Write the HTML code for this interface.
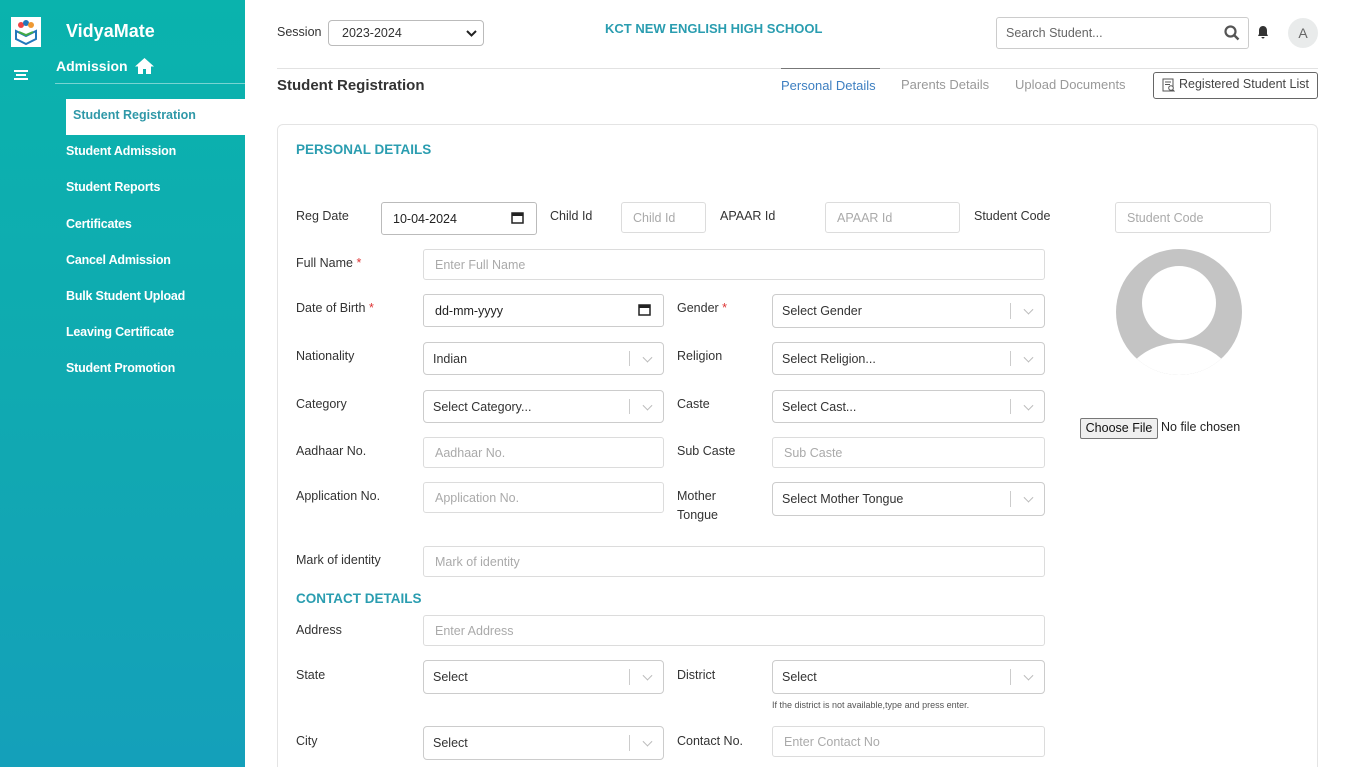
<!DOCTYPE html>
<html style="overflow:hidden;height:767px"><head><meta charset="utf-8"><style>
*{box-sizing:border-box;margin:0;padding:0}
body{width:1348px;height:767px;overflow:hidden;background:#fff;font-family:"Liberation Sans",sans-serif;position:relative;color:#333}
.a{position:absolute}
#sb{left:0;top:0;width:245px;height:767px;background:linear-gradient(180deg,#0ab3ad 0%,#11a8b2 60%,#14a0ba 100%)}
.mi{position:absolute;left:66px;color:#fff;font-weight:bold;font-size:12.5px;letter-spacing:-0.2px}
.lbl{position:absolute;font-size:12.5px;color:#333;line-height:19px}
.in{position:absolute;border:1px solid #dcdcdc;border-radius:3px;font-size:12.5px;color:#aaa;padding-left:11px;display:flex;align-items:center;background:#fff}
.sel{position:absolute;border:1px solid #ccc;border-radius:4px;font-size:12.5px;color:#333;padding-left:9px;display:flex;align-items:center;background:#fff}
.sel:after{content:"";position:absolute;right:33px;top:8px;bottom:8px;border-left:1px solid #ccc}
.sel.n:after{display:none}
.sel i{position:absolute;right:12px;top:50%;width:7px;height:7px;border-right:1.5px solid #bbb;border-bottom:1.5px solid #bbb;transform:translateY(-70%) rotate(45deg)}
.req{color:#d33}
.h{position:absolute;color:#2a9db0;font-size:13.5px;font-weight:bold}
</style></head><body>
<div id="sb" class="a">
  <div class="a" style="left:11px;top:17px;width:30px;height:30px;background:#fff">
    <svg width="30" height="30" viewBox="0 0 30 30"><circle cx="10" cy="8" r="3" fill="#e44"/><circle cx="15" cy="6" r="3" fill="#27b"/><circle cx="20" cy="8" r="3" fill="#e93"/><path d="M5 14l10 5 10-5v8l-10 5-10-5z" fill="none" stroke="#27b" stroke-width="2"/><path d="M8 15l7 3 7-3" stroke="#4a4" stroke-width="2" fill="none"/></svg>
  </div>
  <div class="a" style="left:66px;top:21px;color:#fff;font-weight:bold;font-size:18px">VidyaMate</div>
  <div class="a" style="left:14px;top:70px;width:14px">
    <div style="height:2px;background:#fff;margin-bottom:2px"></div><div style="height:2px;background:#fff;margin:0 2px 2px"></div><div style="height:2px;background:#fff"></div>
  </div>
  <div class="a" style="left:56px;top:58px;color:#fff;font-weight:bold;font-size:14px">Admission</div>
  <svg class="a" style="left:134px;top:57px" width="21" height="18" viewBox="0 0 21 18"><path d="M10.5 1L1 9.5h3V17h5v-5h3v5h5V9.5h3z" fill="#fff"/></svg>
  <div class="a" style="left:55px;top:83px;width:190px;height:1px;background:rgba(255,255,255,.45)"></div>
  <div class="a" style="left:66px;top:99px;width:179px;height:36px;background:#fff"></div>
  <div class="a" style="left:73px;top:108px;color:#2f98a8;font-weight:bold;font-size:12.5px">Student Registration</div>
  <div class="mi" style="top:144px">Student Admission</div>
  <div class="mi" style="top:180px">Student Reports</div>
  <div class="mi" style="top:217px">Certificates</div>
  <div class="mi" style="top:253px">Cancel Admission</div>
  <div class="mi" style="top:289px">Bulk Student Upload</div>
  <div class="mi" style="top:325px">Leaving Certificate</div>
  <div class="mi" style="top:361px">Student Promotion</div>
</div>

<div class="lbl" style="left:277px;top:23px">Session</div>
<div class="sel n" style="left:328px;top:20px;width:156px;height:26px;padding-left:13px;border-color:#bbb">2023-2024<svg class="a" style="right:6px;top:9px" width="11" height="8"><path d="M1 1l4.5 4.5L10 1" stroke="#222" stroke-width="2" fill="none"/></svg></div>
<div class="a" style="left:605px;top:21px;color:#2a9db0;font-weight:bold;font-size:13px">KCT NEW ENGLISH HIGH SCHOOL</div>
<div class="in" style="left:996px;top:17px;width:253px;height:32px;border-color:#ccc;color:#666;padding-left:9px">Search Student...</div>
<svg class="a" style="left:1224px;top:25px" width="16" height="16"><circle cx="6.5" cy="6.5" r="5" stroke="#555" stroke-width="2.2" fill="none"/><path d="M10 10l4.5 4.5" stroke="#555" stroke-width="2.4"/></svg>
<svg class="a" style="left:1257px;top:25px" width="12" height="14"><path d="M6 1c-2.5 0-4 2-4 4.5V9L1 11h10l-1-2V5.5C10 3 8.5 1 6 1zM4.5 12a1.5 1.5 0 003 0z" fill="#333"/></svg>
<div class="a" style="left:1288px;top:18px;width:30px;height:30px;border-radius:50%;background:#e9ebeb;color:#666;font-size:14px;text-align:center;line-height:30px">A</div>
<div class="a" style="left:277px;top:68px;width:1041px;height:1px;background:#e2e2e2"></div>
<div class="a" style="left:781px;top:68px;width:99px;height:1px;background:#777"></div>
<div class="a" style="left:277px;top:77px;font-weight:bold;font-size:15px;color:#333">Student Registration</div>
<div class="a" style="left:781px;top:78px;font-size:13px;color:#3d7fc1">Personal Details</div>
<div class="a" style="left:901px;top:77px;font-size:13px;color:#999">Parents Details</div>
<div class="a" style="left:1015px;top:77px;font-size:13px;color:#999">Upload Documents</div>
<div class="a" style="left:1153px;top:72px;width:165px;height:27px;border:1px solid #666;border-radius:3px;font-size:12.5px;color:#444;padding:4px 0 0 25px;white-space:nowrap">Registered Student List</div>
<svg class="a" style="left:1162px;top:78px" width="14" height="15"><rect x="1" y="1" width="10" height="12" fill="none" stroke="#555"/><path d="M3 4h6M3 6.5h5" stroke="#555"/><circle cx="9" cy="10" r="2.3" fill="#fff" stroke="#555"/><path d="M10.5 11.5l2 2" stroke="#555"/></svg>

<div class="a" style="left:277px;top:124px;width:1041px;height:643px;border:1px solid #e4e4e4;border-bottom:none;border-radius:6px 6px 0 0"></div>
<div class="h" style="left:296px;top:142px">PERSONAL DETAILS</div>

<div class="lbl" style="left:296px;top:207px">Reg Date</div>
<div class="in" style="left:381px;top:202px;width:156px;height:33px;color:#222;border-color:#bbb">10-04-2024</div>
<svg class="a" style="left:511px;top:211px" width="13" height="13"><rect x="1" y="2" width="11" height="10" fill="none" stroke="#222" stroke-width="1.5"/><rect x="1" y="2" width="11" height="3" fill="#222"/></svg>
<div class="lbl" style="left:550px;top:207px">Child Id</div>
<div class="in" style="left:621px;top:202px;width:85px;height:31px">Child Id</div>
<div class="lbl" style="left:720px;top:207px">APAAR Id</div>
<div class="in" style="left:825px;top:202px;width:135px;height:31px">APAAR Id</div>
<div class="lbl" style="left:974px;top:207px">Student Code</div>
<div class="in" style="left:1115px;top:202px;width:156px;height:31px">Student Code</div>

<div class="lbl" style="left:296px;top:254px">Full Name <span class="req">*</span></div>
<div class="in" style="left:423px;top:249px;width:622px;height:31px">Enter Full Name</div>

<div class="lbl" style="left:296px;top:299px">Date of Birth <span class="req">*</span></div>
<div class="in" style="left:423px;top:294px;width:241px;height:33px;color:#222;border-color:#ccc">dd-mm-yyyy</div>
<svg class="a" style="left:638px;top:303px" width="13" height="13"><rect x="1" y="2" width="11" height="10" fill="none" stroke="#222" stroke-width="1.5"/><rect x="1" y="2" width="11" height="3" fill="#222"/></svg>
<div class="lbl" style="left:677px;top:299px">Gender <span class="req">*</span></div>
<div class="sel" style="left:772px;top:294px;width:273px;height:34px">Select Gender<i></i></div>

<div class="lbl" style="left:296px;top:347px">Nationality</div>
<div class="sel" style="left:423px;top:342px;width:241px;height:33px">Indian<i></i></div>
<div class="lbl" style="left:677px;top:347px">Religion</div>
<div class="sel" style="left:772px;top:342px;width:273px;height:33px">Select Religion...<i></i></div>

<div class="lbl" style="left:296px;top:395px">Category</div>
<div class="sel" style="left:423px;top:390px;width:241px;height:33px">Select Category...<i></i></div>
<div class="lbl" style="left:677px;top:395px">Caste</div>
<div class="sel" style="left:772px;top:390px;width:273px;height:33px">Select Cast...<i></i></div>

<div class="lbl" style="left:296px;top:442px">Aadhaar No.</div>
<div class="in" style="left:423px;top:437px;width:241px;height:31px">Aadhaar No.</div>
<div class="lbl" style="left:677px;top:442px">Sub Caste</div>
<div class="in" style="left:772px;top:437px;width:273px;height:31px">Sub Caste</div>

<div class="lbl" style="left:296px;top:487px">Application No.</div>
<div class="in" style="left:423px;top:482px;width:241px;height:31px">Application No.</div>
<div class="lbl" style="left:677px;top:487px">Mother<br>Tongue</div>
<div class="sel" style="left:772px;top:482px;width:273px;height:34px">Select Mother Tongue<i></i></div>

<div class="lbl" style="left:296px;top:551px">Mark of identity</div>
<div class="in" style="left:423px;top:546px;width:622px;height:31px">Mark of identity</div>

<div class="h" style="left:296px;top:591px">CONTACT DETAILS</div>
<div class="lbl" style="left:296px;top:621px">Address</div>
<div class="in" style="left:423px;top:615px;width:622px;height:31px">Enter Address</div>

<div class="lbl" style="left:296px;top:666px">State</div>
<div class="sel" style="left:423px;top:660px;width:241px;height:34px">Select<i></i></div>
<div class="lbl" style="left:677px;top:666px">District</div>
<div class="sel" style="left:772px;top:660px;width:273px;height:34px">Select<i></i></div>
<div class="a" style="left:772px;top:700px;font-size:9px;color:#555">If the district is not available,type and press enter.</div>

<div class="lbl" style="left:296px;top:732px">City</div>
<div class="sel" style="left:423px;top:726px;width:241px;height:34px">Select<i></i></div>
<div class="lbl" style="left:677px;top:732px">Contact No.</div>
<div class="in" style="left:772px;top:726px;width:273px;height:31px">Enter Contact No</div>

<svg class="a" style="left:1114px;top:248px" width="130" height="130" viewBox="0 0 130 130">
<defs><clipPath id="c"><circle cx="65" cy="64" r="63"/></clipPath></defs>
<circle cx="65" cy="64" r="63" fill="#c4c4c4"/>
<circle cx="65" cy="55" r="37" fill="#fff"/>
<ellipse cx="65" cy="145" rx="58" ry="50" fill="#fff" clip-path="url(#c)"/>
</svg>
<div class="a" style="left:1080px;top:418px;width:78px;height:21px;border:1px solid #777;border-radius:2px;background:#efefef;font-size:12.5px;color:#111;text-align:center;line-height:19px">Choose File</div>
<div class="a" style="left:1161px;top:420px;font-size:12.5px;color:#222">No file chosen</div>
</body></html>
